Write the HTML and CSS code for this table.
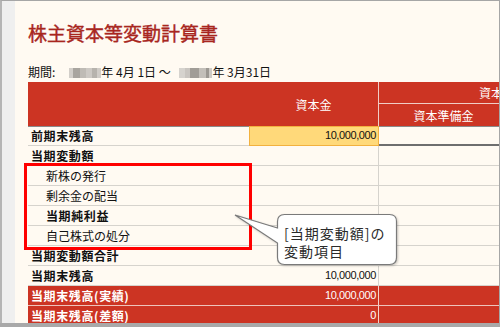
FILE: index.html
```html
<!DOCTYPE html>
<html lang="ja">
<head>
  <meta charset="UTF-8">
  <title>株主資本等変動計算書</title>
  <link rel="stylesheet" href="styles.css">
</head>
<body>

<div class="frame">
  <div class="side"></div>

  <div class="page">
    <h1 class="title">株主資本等変動計算書</h1>
    <p class="period">期間:<span class="mosaic"></span>年 4月 1日 ～ <span class="mosaic mosaic-b"></span>年 3月31日</p>

    <div class="sheet">
      <!-- 見出し -->
      <div class="head">
        <div class="hd hd-label"></div>
        <div class="hd hd-capital">資本金</div>
        <div class="hd hd-surplus">資本剰余金</div>
        <div class="hd hd-reserve">資本準備金</div>
        <div class="hd hd-other">その他資本剰余金</div>
      </div>

      <div class="row opening">
        <div class="lbl strong">前期末残高</div>
        <div class="amt active">10,000,000</div>
        <div class="cell focus"></div>
        <div class="cell"></div>
      </div>
      <div class="row">
        <div class="lbl strong">当期変動額</div>
        <div class="amt"></div>
        <div class="cell"></div>
        <div class="cell"></div>
      </div>
      <div class="row">
        <div class="lbl sub">新株の発行</div>
        <div class="amt"></div>
        <div class="cell"></div>
        <div class="cell"></div>
      </div>
      <div class="row">
        <div class="lbl sub">剰余金の配当</div>
        <div class="amt"></div>
        <div class="cell"></div>
        <div class="cell"></div>
      </div>
      <div class="row">
        <div class="lbl sub strong">当期純利益</div>
        <div class="amt"></div>
        <div class="cell"></div>
        <div class="cell"></div>
      </div>
      <div class="row">
        <div class="lbl sub">自己株式の処分</div>
        <div class="amt"></div>
        <div class="cell"></div>
        <div class="cell"></div>
      </div>
      <div class="row">
        <div class="lbl strong">当期変動額合計</div>
        <div class="amt"></div>
        <div class="cell"></div>
        <div class="cell"></div>
      </div>
      <div class="row">
        <div class="lbl strong">当期末残高</div>
        <div class="amt">10,000,000</div>
        <div class="cell"></div>
        <div class="cell"></div>
      </div>
      <div class="row result">
        <div class="lbl strong">当期末残高(実績)</div>
        <div class="amt">10,000,000</div>
        <div class="cell"></div>
        <div class="cell"></div>
      </div>
      <div class="row result">
        <div class="lbl strong">当期末残高(差額)</div>
        <div class="amt">0</div>
        <div class="cell"></div>
        <div class="cell"></div>
      </div>
    </div>

    <!-- 変動項目の囲み -->
    <div class="mark-box"></div>

    <!-- 吹き出し -->
    <svg class="balloon" width="175" height="62" viewBox="0 0 175 62">
      <path d="M55.5 6.5 H160.5 Q167.5 6.5 167.5 13.5 V49.5 Q167.5 56.5 160.5 56.5 H55.5 Q48.5 56.5 48.5 49.5 V35 L6 7 L48.5 20 V13.5 Q48.5 6.5 55.5 6.5 Z"
            fill="#ffffff" stroke="#7a7a7a" stroke-width="1.2"/>
    </svg>
    <div class="balloon-text">[当期変動額]の<br>変動項目</div>
  </div>
</div>

</body>
</html>
```

FILE: styles.css
```css
/* 全体 */
body {
  margin: 0;
  width: 500px;
  height: 327px;
  overflow: hidden;
  background: #a9a9a9;
  font-family: "Noto Sans CJK JP", sans-serif;
  color: #111;
}

/* 画面の枠 */
.frame {
  box-sizing: border-box;
  display: flex;
  width: 500px;
  height: 323px;
  border-top: 1px solid #a6a6a6;
  border-left: 2px solid #b5b5b5;
  border-right: 1px solid #a6a6a6;
}

.side {
  width: 13px;
  background: #efefef;
}

.page {
  flex: 1;
  position: relative;
  overflow: hidden;
  background: #fffaf2;
}

/* タイトル */
.title {
  margin: 20px 0 0 13px;
  font-size: 19px;
  line-height: 24px;
  font-weight: normal;
  color: #a8261e;
  -webkit-text-stroke: 0.4px #a8261e;
}

.period {
  margin: 19px 0 0 13px;
  font-size: 12px;
  line-height: 16px;
  white-space: nowrap;
}

/* 年のぼかし部分 */
.mosaic {
  display: inline-block;
  width: 32px;
  height: 10px;
  margin-left: 14px;
  vertical-align: -1px;
  background:
    linear-gradient(90deg, #d2cec9 0 4px, #a9a59f 4px 11px, #bfbbb5 11px 17px, #cdc9c4 17px 23px, #b7b3ad 23px 28px, #d0ccc7 28px);
}

.mosaic-b {
  margin-left: 6px;
  width: 33px;
  background:
    linear-gradient(90deg, #d6d3ce 0 6px, #c9c5c0 6px 11px, #a19d97 11px 20px, #c3bfb9 20px 27px, #9c9892 27px 30px, #cfcbc6 30px);
}

/* 表 */
.sheet {
  margin: 2px 0 0 13px;
  width: max-content;
}

.head {
  display: grid;
  grid-template-columns: 221px 130px 130px 130px;
  grid-template-rows: 22px 22px;
  background: #cc3423;
}

.hd {
  box-sizing: border-box;
  display: flex;
  align-items: center;
  justify-content: center;
  color: #fff;
  font-size: 12px;
  white-space: nowrap;
}

.hd-label {
  grid-column: 1;
  grid-row: 1 / 3;
}

.hd-capital {
  grid-column: 2;
  grid-row: 1 / 3;
  border-right: 1px solid #f0cdc6;
}

.hd-surplus {
  grid-column: 3 / 5;
  grid-row: 1;
  border-bottom: 1px solid #f0cdc6;
}

.hd-reserve {
  grid-column: 3;
  grid-row: 2;
  border-right: 1px solid #f0cdc6;
}

.hd-other {
  grid-column: 4;
  grid-row: 2;
}

.row {
  display: grid;
  grid-template-columns: 221px 130px 130px 130px;
  height: 20px;
}

.row > div {
  box-sizing: border-box;
  border-bottom: 1px solid #d6d3cd;
  font-size: 12px;
  line-height: 19px;
  white-space: nowrap;
  overflow: hidden;
}

.lbl {
  padding-left: 3px;
}

.lbl.sub {
  padding-left: 18px;
}

.strong {
  font-weight: bold;
  letter-spacing: 0.6px;
}

.row > .amt {
  padding-right: 2px;
  text-align: right;
  border-right: 1px solid #d6d3cd;
  font-family: "Liberation Sans", sans-serif;
  font-size: 11px;
  letter-spacing: -0.4px;
}

.row > .cell {
  border-right: 1px solid #d6d3cd;
}

/* 前期末残高の行 */
.opening > div {
  border-top: 1px solid #8a8a8a;
  line-height: 17px;
}

.row > .amt.active {
  background: #ffd97a;
  border: 1px solid #f2b13f;
}

.row > .cell.focus {
  border-bottom: 2px solid #6e6e6e;
}

/* 実績・差額の行 */
.result > div {
  background: #cc3423;
  color: #fff;
}

.row.result > div {
  border-bottom-color: #eec3bb;
}

.row.result > .amt,
.row.result > .cell {
  border-right-color: #f2d2cb;
}

/* 囲み枠と吹き出し */
.mark-box {
  position: absolute;
  left: 9px;
  top: 162px;
  width: 228px;
  height: 87px;
  box-sizing: border-box;
  border: 3px solid #ff0000;
}

.balloon {
  position: absolute;
  left: 214px;
  top: 207px;
  filter: drop-shadow(1px 1px 1px rgba(0, 0, 0, 0.2));
}

.balloon-text {
  position: absolute;
  left: 269px;
  top: 223px;
  font-size: 14px;
  line-height: 18px;
  color: #2a2a2a;
  letter-spacing: 1px;
  white-space: nowrap;
}
```
